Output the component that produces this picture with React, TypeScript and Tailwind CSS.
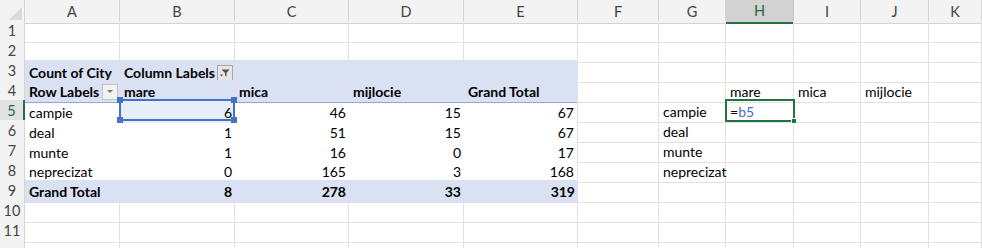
import React from "react";

type Cell = {
  text?: React.ReactNode;
  bold?: boolean;
  align?: "left" | "right";
};

const COLS = ["A", "B", "C", "D", "E", "F", "G", "H", "I", "J", "K"];

const pivotRows: (string | number)[][] = [
  ["campie", 6, 46, 15, 67],
  ["deal", 1, 51, 15, 67],
  ["munte", 1, 16, 0, 17],
  ["neprecizat", 0, 165, 3, 168],
];

function FilterButton() {
  return (
    <span className="ml-auto flex h-[16px] w-[16px] shrink-0 items-center justify-center border border-[#a6a6a6] bg-[#e6e6e6]">
      <svg width="12" height="10" viewBox="0 0 12 10">
        <path d="M2.5 1.5h8L7.5 5v3.5L6 7.5V5z" fill="#555" />
        <path d="M1 6.5l1.5 2L4 6.5z" fill="#555" />
      </svg>
    </span>
  );
}

function DropButton() {
  return (
    <span className="ml-auto flex h-[16px] w-[16px] shrink-0 items-center justify-center border border-[#c3c3c3] bg-[#f2f2f2]">
      <svg width="8" height="5" viewBox="0 0 8 5">
        <path d="M1 1h6L4 4z" fill="#777" />
      </svg>
    </span>
  );
}

function buildRow(r: number): Cell[] {
  const row: Cell[] = COLS.map(() => ({}));
  if (r === 3) {
    row[0] = { text: "Count of City", bold: true };
    row[1] = {
      text: (
        <>
          <span>Column Labels</span>
          <FilterButton />
        </>
      ),
      bold: true,
    };
  }
  if (r === 4) {
    row[0] = {
      text: (
        <>
          <span>Row Labels</span>
          <DropButton />
        </>
      ),
      bold: true,
    };
    row[1] = { text: "mare", bold: true };
    row[2] = { text: "mica", bold: true };
    row[3] = { text: "mijlocie", bold: true };
    row[4] = { text: "Grand Total", bold: true };
    row[7] = { text: "mare" };
    row[8] = { text: "mica" };
    row[9] = { text: "mijlocie" };
  }
  if (r >= 5 && r <= 8) {
    const d = pivotRows[r - 5];
    row[0] = { text: d[0] };
    for (let i = 1; i <= 4; i++) row[i] = { text: d[i], align: "right" };
    row[6] = { text: d[0] };
    if (r === 5) {
      row[7] = {
        text: (
          <>
            <span>=</span>
            <span className="text-[#3f6fd1]">b5</span>
          </>
        ),
      };
    }
  }
  if (r === 9) {
    row[0] = { text: "Grand Total", bold: true };
    const t = [8, 278, 33, 319];
    for (let i = 1; i <= 4; i++) row[i] = { text: t[i - 1], bold: true, align: "right" };
  }
  return row;
}

function cellClass(r: number, c: number): string {
  const inPivot = r >= 3 && r <= 9 && c <= 4;
  if (inPivot) {
    if (r === 3) return "bg-[#d9e1f2]";
    if (r === 4) return "bg-[#d9e1f2] border-b border-[#8ea9db]";
    if (r === 9) return "bg-[#d9e1f2] border-b border-[#d9e1f2]";
    if (r === 8) return c === 4 ? "border-b border-r border-[#8ea9db] border-r-[#e1e1e1]" : "border-b border-[#8ea9db]";
    if (r === 5 && c === 1) return "bg-[#e8eef9]";
    return c === 4 ? "border-r border-[#e1e1e1]" : "";
  }
  return "border-r border-b border-[#e1e1e1]";
}

export default function App() {
  const rows = Array.from({ length: 12 }, (_, i) => i + 1);
  const grid =
    "grid grid-cols-[25px_95px_115px_114px_115px_114px_81px_67px_68px_67px_68px_1fr]";

  return (
    <div
      className="relative h-[248px] w-[982px] overflow-hidden bg-white text-[14px] text-black"
      style={{ fontFamily: "Lato, 'Liberation Sans', sans-serif" }}
    >
      {/* column headers */}
      <div className={`${grid} h-[20px]`}>
        <div className="flex items-end justify-end border-r border-b border-[#d4d4d4] bg-[#f3f3f3] p-[2px]">
          <svg width="14" height="14" viewBox="0 0 14 14">
            <path d="M14 0V14H0z" fill="#dadada" />
          </svg>
        </div>
        {COLS.map((c) =>
          c === "H" ? (
            <div
              key={c}
              className="flex items-center justify-center border-r border-b-2 border-[#c6c6c6] border-b-[#217346] bg-[#d2d2d2] text-[14.5px] text-[#1e6b40]"
            >
              {c}
            </div>
          ) : (
            <div
              key={c}
              className="flex items-center justify-center border-r border-b border-[#d4d4d4] bg-[#f3f3f3] text-[14.5px] text-[#444]"
            >
              {c}
            </div>
          )
        )}
      </div>

      {rows.map((r) => {
        const cells = buildRow(r);
        return (
          <div key={r} className={`${grid} h-[20px]`}>
            {r === 5 ? (
              <div className="flex items-center justify-center border-r-2 border-b border-[#d4d4d4] border-r-[#217346] bg-[#e1e1e1] text-[14.5px] text-[#1e6b40]">
                {r}
              </div>
            ) : (
              <div className="flex items-center justify-center border-r border-b border-[#d4d4d4] bg-[#f3f3f3] text-[14.5px] text-[#444]">
                {r < 12 ? r : ""}
              </div>
            )}
            {cells.map((cell, c) => (
              <div
                key={c}
                className={`flex min-w-0 items-end overflow-visible whitespace-nowrap pl-[4px] pr-[2px] pb-[2px] leading-[17px] ${
                  cell.align === "right" ? "justify-end pr-[3px]" : "justify-start"
                } ${cell.bold ? "font-bold" : ""} ${cellClass(r, c)}`}
              >
                {cell.text}
              </div>
            ))}
          </div>
        );
      })}

      {/* referenced range B5 */}
      <div className="pointer-events-none absolute left-[119px] top-[99px] h-[22px] w-[116px] border-2 border-[#4472c4]">
        <span className="absolute -left-[4px] -top-[4px] h-[6px] w-[6px] bg-[#4472c4]" />
        <span className="absolute -right-[4px] -top-[4px] h-[6px] w-[6px] bg-[#4472c4]" />
        <span className="absolute -left-[4px] -bottom-[4px] h-[6px] w-[6px] bg-[#4472c4]" />
        <span className="absolute -right-[4px] -bottom-[4px] h-[6px] w-[6px] bg-[#4472c4]" />
      </div>

      {/* active cell H5 */}
      <div className="pointer-events-none absolute left-[725px] top-[99px] h-[23px] w-[70px] border-2 border-[#217346]">
        <span className="absolute -right-[4px] -bottom-[4px] h-[6px] w-[6px] border border-white bg-[#217346]" />
      </div>
    </div>
  );
}
